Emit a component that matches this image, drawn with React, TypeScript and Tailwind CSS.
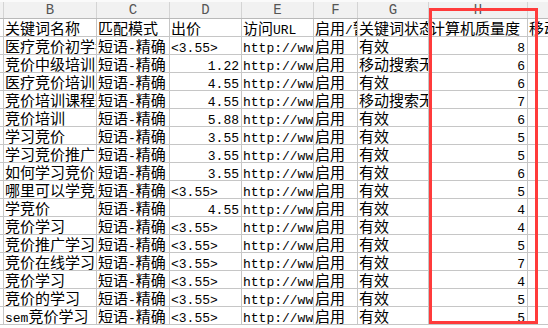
import React from 'react';

type Row = { b: string; c: string; d: string; e: string; f: string; g: string; h: string };

const rows: Row[] = [
  { b: '医疗竞价初学者', c: '短语-精确', d: '<3.55>', e: 'http://www', f: '启用', g: '有效', h: '8' },
  { b: '竞价中级培训', c: '短语-精确', d: '1.22', e: 'http://www', f: '启用', g: '移动搜索无效', h: '6' },
  { b: '医疗竞价培训', c: '短语-精确', d: '4.55', e: 'http://www', f: '启用', g: '有效', h: '6' },
  { b: '竞价培训课程班', c: '短语-精确', d: '4.55', e: 'http://www', f: '启用', g: '移动搜索无效', h: '7' },
  { b: '竞价培训', c: '短语-精确', d: '5.88', e: 'http://www', f: '启用', g: '有效', h: '6' },
  { b: '学习竞价', c: '短语-精确', d: '3.55', e: 'http://www', f: '启用', g: '有效', h: '5' },
  { b: '学习竞价推广', c: '短语-精确', d: '3.55', e: 'http://www', f: '启用', g: '有效', h: '5' },
  { b: '如何学习竞价', c: '短语-精确', d: '3.55', e: 'http://www', f: '启用', g: '有效', h: '6' },
  { b: '哪里可以学竞价', c: '短语-精确', d: '<3.55>', e: 'http://www', f: '启用', g: '有效', h: '5' },
  { b: '学竞价', c: '短语-精确', d: '4.55', e: 'http://www', f: '启用', g: '有效', h: '4' },
  { b: '竞价学习', c: '短语-精确', d: '<3.55>', e: 'http://www', f: '启用', g: '有效', h: '4' },
  { b: '竞价推广学习', c: '短语-精确', d: '<3.55>', e: 'http://www', f: '启用', g: '有效', h: '5' },
  { b: '竞价在线学习', c: '短语-精确', d: '<3.55>', e: 'http://www', f: '启用', g: '有效', h: '7' },
  { b: '竞价学习', c: '短语-精确', d: '<3.55>', e: 'http://www', f: '启用', g: '有效', h: '4' },
  { b: '竞价的学习', c: '短语-精确', d: '<3.55>', e: 'http://www', f: '启用', g: '有效', h: '5' },
  { b: 'sem竞价学习', c: '短语-精确', d: '<3.55>', e: 'http://www', f: '启用', g: '有效', h: '5' },
];

// ascii runs get a narrow mono face, like the half-width glyphs of the sheet font
function Txt({ s }: { s: string }) {
  const parts = s.match(/[\x20-\x7e]+|[^\x20-\x7e]+/g) || [];
  return (
    <>
      {parts.map((p, k) =>
        /^[\x20-\x7e]+$/.test(p) ? (
          <span key={k} className="font-['Liberation_Mono',monospace] text-[13px]">
            {p}
          </span>
        ) : (
          <span key={k}>{p}</span>
        )
      )}
    </>
  );
}

const cell =
  'h-[18px] border-r border-b border-[#c6c6c6] overflow-hidden whitespace-nowrap leading-[17px] px-[1px] text-black';

function Cell({ w, s, right }: { w: string; s: string; right?: boolean }) {
  return (
    <div className={`${cell} ${w} ${right ? 'text-right pr-[2px]' : ''}`}>
      <Txt s={s} />
    </div>
  );
}

const letters = [
  { w: 'w-[4px]', l: '' },
  { w: 'w-[93px]', l: 'B' },
  { w: 'w-[73px]', l: 'C' },
  { w: 'w-[72px]', l: 'D' },
  { w: 'w-[72px]', l: 'E' },
  { w: 'w-[44px]', l: 'F' },
  { w: 'w-[71px]', l: 'G' },
  { w: 'w-[99px]', l: 'H' },
  { w: 'w-[60px]', l: '' },
];

export default function App() {
  return (
    <div className="relative w-[548px] h-[328px] overflow-hidden bg-white font-['Noto_Sans_CJK_SC',sans-serif] text-[15px]">
      <div className="h-[2px] bg-[#fafafa]" />
      <div className="flex h-[17px] bg-[#f1f1f1] border-b border-[#b9b9b9]">
        {letters.map((c, i) => (
          <div
            key={i}
            className={`${c.w} shrink-0 border-r border-[#d4d4d4] text-center leading-[16px] text-[14px] text-[#555] font-['Liberation_Mono',monospace]`}
          >
            {c.l}
          </div>
        ))}
      </div>

      <div className="flex">
        <div className={`${cell} w-[4px] shrink-0`} />
        <Cell w="w-[93px] shrink-0" s="关键词名称" />
        <Cell w="w-[73px] shrink-0" s="匹配模式" />
        <Cell w="w-[72px] shrink-0" s="出价" />
        <Cell w="w-[72px] shrink-0" s="访问URL" />
        <Cell w="w-[44px] shrink-0" s="启用/暂停" />
        <Cell w="w-[71px] shrink-0" s="关键词状态" />
        <Cell w="w-[99px] shrink-0" s="计算机质量度" />
        <Cell w="w-[60px] shrink-0" s="移动质量度" />
      </div>

      {rows.map((r, i) => (
        <div key={i} className="flex">
          <div className={`${cell} w-[4px] shrink-0`}>·</div>
          <Cell w="w-[93px] shrink-0" s={r.b} />
          <Cell w="w-[73px] shrink-0" s={r.c} />
          <Cell w="w-[72px] shrink-0" s={r.d} right={!r.d.startsWith('<')} />
          <Cell w="w-[72px] shrink-0" s={r.e} />
          <Cell w="w-[44px] shrink-0" s={r.f} />
          <Cell w="w-[71px] shrink-0" s={r.g} />
          <Cell w="w-[99px] shrink-0" s={r.h} right />
          <Cell w="w-[60px] shrink-0" s="" />
        </div>
      ))}

      <div className="absolute left-[429px] top-[8px] w-[109px] h-[316px] border-[3px] border-[#ff3b3b]" />
    </div>
  );
}
